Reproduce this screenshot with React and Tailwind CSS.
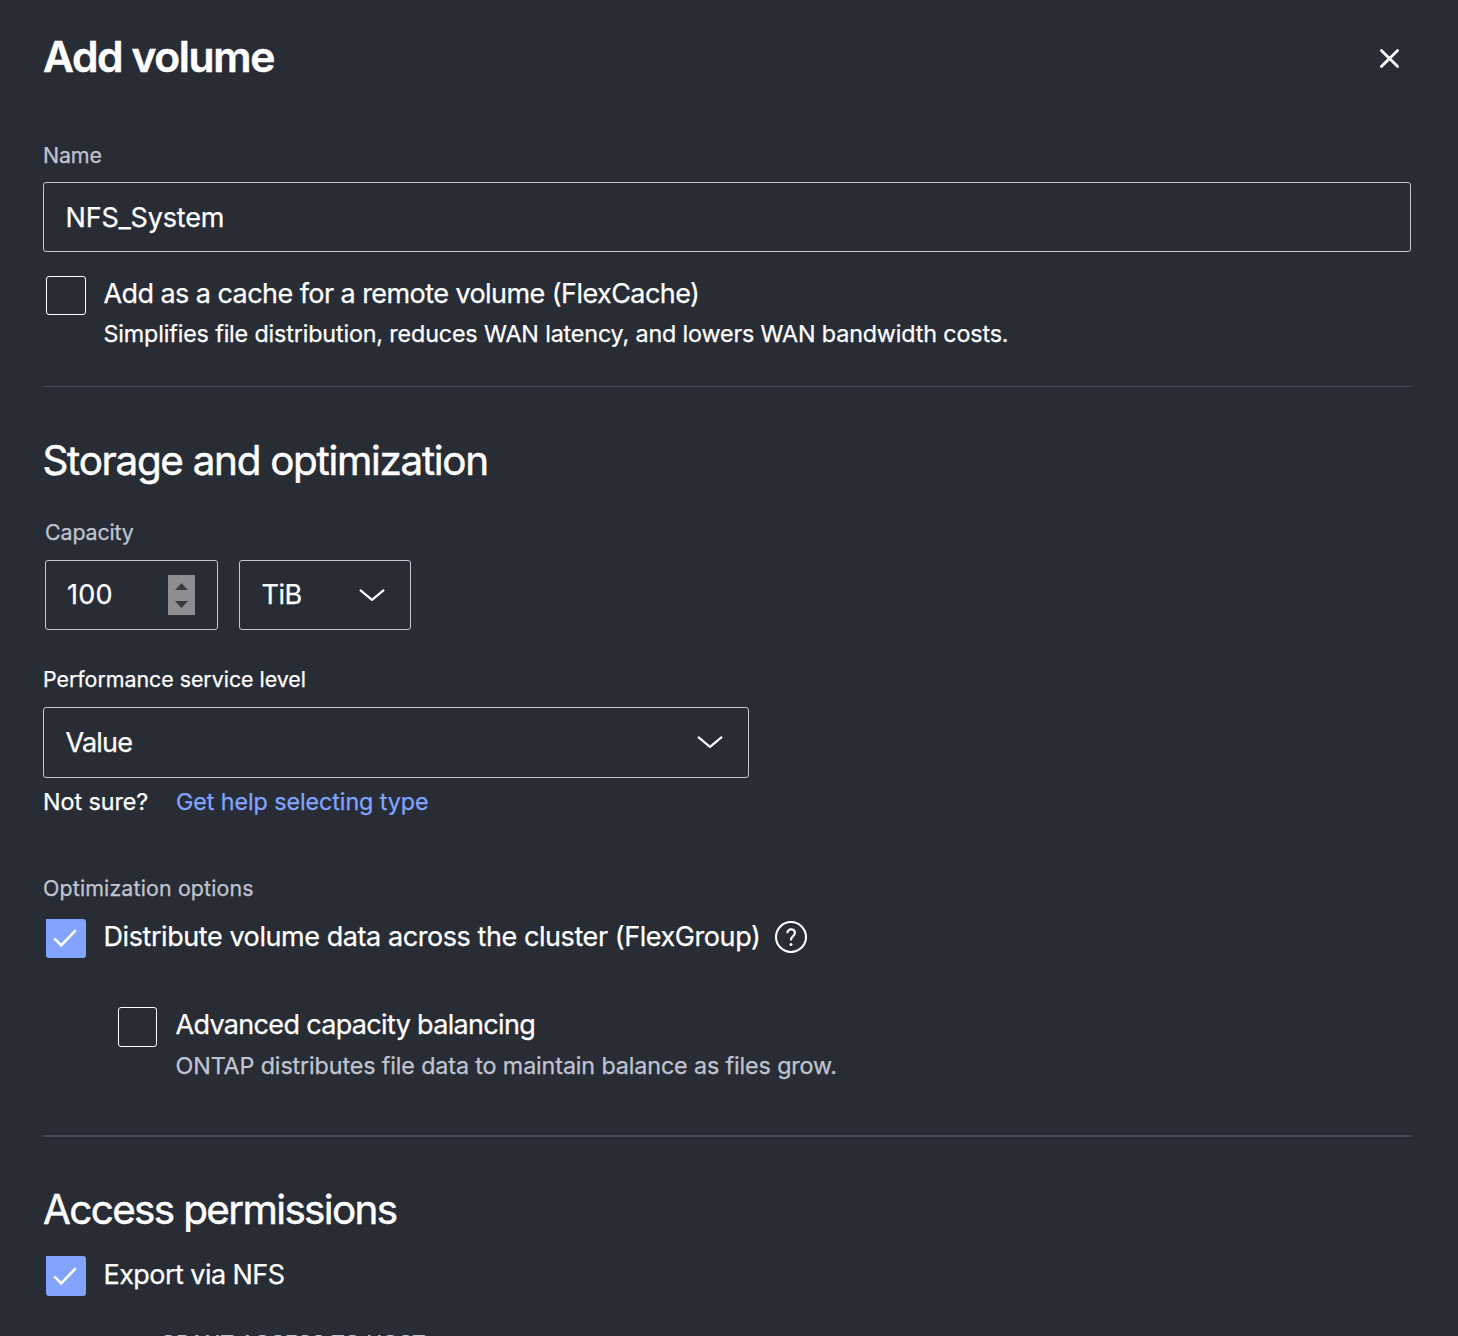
import React from "react";

function Checkbox({ checked, className }) {
  if (checked) {
    return (
      <span className={`flex shrink-0 items-center justify-center rounded-[3px] rounded-tl-none bg-[#82a4ff] ${className}`}>
        <svg width="40" height="39" viewBox="0 0 40 39" fill="none" stroke="#fff" strokeWidth="2.6">
          <path d="M8.3 19.4 15.2 26.3 29.8 11.2" />
        </svg>
      </span>
    );
  }
  return <span className={`shrink-0 rounded-[3px] border border-white ${className}`} />;
}

function Chevron({ className = "" }) {
  return (
    <svg className={`shrink-0 ${className}`} width="28" height="14" viewBox="0 0 28 14" fill="none" stroke="#fff" strokeWidth="2.2" strokeLinecap="round" strokeLinejoin="round">
      <path d="M2.6 2.4 14 11.8 25.4 2.4" />
    </svg>
  );
}

function Label({ className, children }) {
  return <div className={`h-[26px] text-[21.4px] leading-[26px] ${className}`}>{children}</div>;
}

export default function App() {
  return (
    <main className="h-[1336px] w-full overflow-hidden whitespace-nowrap bg-[#282c35] pr-[47px] pl-[43px] font-['Inter',sans-serif] text-white [-webkit-text-stroke:0.25px]">
      <header className="flex items-start justify-between pt-[30px]">
        <h1 className="mt-px h-[51px] text-[42.5px] leading-[52px] font-semibold tracking-[-1.37px] [-webkit-text-stroke:0.5px]">Add volume</h1>
        <button aria-label="Close" className="mt-[18px] mr-[11px]">
          <svg width="21" height="21" viewBox="0 0 21 21" fill="none" stroke="#fff" strokeWidth="2.8" strokeLinecap="round">
            <path d="M2.4 2.4 18.6 18.6M18.6 2.4 2.4 18.6" />
          </svg>
        </button>
      </header>

      <section className="h-[305px] border-b border-[#444a59] pt-[60px]">
        <Label className="tracking-[-0.15px] text-[#c0c4d1]">Name</Label>
        <div className="mt-[14px] flex h-[70px] items-center rounded-[3px] border border-[#c4c8d4] pt-[2px] pl-[21.5px] text-[27px] tracking-[-0.2px]">
          NFS_System
        </div>
        <div className="mt-6 flex pl-[3px]">
          <Checkbox className="h-[39px] w-10" />
          <div className="ml-[17.5px]">
            <div className="mt-[2px] h-8 text-[27px] leading-8 tracking-[-0.565px]">Add as a cache for a remote volume (FlexCache)</div>
            <div className="mt-[10px] h-7 text-[23.3px] leading-7 tracking-[-0.145px]">
              Simplifies file distribution, reduces WAN latency, and lowers WAN bandwidth costs.
            </div>
          </div>
        </div>
      </section>

      <section className="h-[750px] border-b-2 border-[#444a59] pt-[49px]">
        <h2 className="-ml-[0.5px] h-[50px] text-[40.4px] leading-[50px] tracking-[-1.29px] [-webkit-text-stroke:0.5px]">Storage and optimization</h2>
        <Label className="mt-[33px] pl-[2px] tracking-[-0.13px] text-[#c0c4d1]">Capacity</Label>
        <div className="mt-[15px] flex gap-[21px] pl-[2px] text-[27px]">
          <div className="flex h-[70px] w-[173px] items-center justify-between rounded-[3px] border border-[#c4c8d4] pr-[22px] pl-[21px]">
            <span className="tracking-[0.2px]">100</span>
            <svg width="27" height="40" viewBox="0 0 27 40">
              <rect width="27" height="40" fill="#8d8d92" />
              <path d="M13.5 8.3 20 15H7zM7 26h13l-6.5 7z" fill="#3b3b3d" />
            </svg>
          </div>
          <div className="flex h-[70px] w-[172px] items-center justify-between rounded-[3px] border border-[#c4c8d4] pr-6 pl-[21.5px]">
            <span className="tracking-[-0.48px]">TiB</span>
            <Chevron />
          </div>
        </div>

        <Label className="mt-9 tracking-[-0.028px]">Performance service level</Label>
        <div className="mt-[15px] flex h-[71px] w-[706px] items-center justify-between rounded-[3px] border border-[#c4c8d4] pr-6 pl-[21.5px] text-[27px] tracking-[-0.8px]">
          <span className="mt-[2px]">Value</span>
          <Chevron className="mb-px" />
        </div>
        <div className="mt-[10px] flex h-7 text-[23.3px] leading-7">
          <span className="w-[133px] tracking-[-0.06px]">Not sure?</span>
          <a className="tracking-[-0.076px] text-[#82a4ff]">Get help selecting type</a>
        </div>

        <Label className="mt-[59px] tracking-[0.142px] text-[#c0c4d1]">Optimization options</Label>
        <div className="mt-[18px] flex pl-[3px]">
          <Checkbox checked className="h-[39px] w-10" />
          <span className="mt-[2px] ml-[17.5px] h-8 text-[27px] leading-8 tracking-[-0.43px]">
            Distribute volume data across the cluster (FlexGroup)
          </span>
          <svg className="mt-[2px] ml-[14.5px]" width="32" height="32" viewBox="0 0 32 32" fill="none" stroke="#fff" strokeWidth="2.1">
            <circle cx="16" cy="16" r="15" />
            <path d="M12.4 12.2C12.4 9.8 13.8 8.4 16.1 8.4s3.8 1.4 3.8 3.6c0 3.1-3.9 3.6-3.9 6.6v1" />
            <circle cx="16" cy="23.6" r="1.5" fill="#fff" stroke="none" />
          </svg>
        </div>
        <div className="mt-[49px] flex pl-[75px]">
          <Checkbox className="h-10 w-[39px]" />
          <div className="ml-[18.5px]">
            <div className="mt-[2px] h-8 text-[27px] leading-8 tracking-[-0.67px]">Advanced capacity balancing</div>
            <div className="mt-[11px] h-7 text-[23.3px] leading-7 tracking-[-0.12px] text-[#c0c4d1]">
              ONTAP distributes file data to maintain balance as files grow.
            </div>
          </div>
        </div>
      </section>

      <section className="pt-12">
        <h2 className="h-[50px] text-[40.4px] leading-[50px] tracking-[-1.62px] [-webkit-text-stroke:0.5px]">Access permissions</h2>
        <div className="mt-[21px] flex pl-[3px]">
          <Checkbox checked className="h-10 w-10" />
          <span className="mt-[3px] ml-[17.5px] h-8 text-[27px] leading-8 tracking-[-0.558px]">Export via NFS</span>
        </div>
        <Label className="mt-[34px] pl-[117px] tracking-[-0.08px] text-[#c0c4d1]">GRANT ACCESS TO HOST</Label>
      </section>
    </main>
  );
}
